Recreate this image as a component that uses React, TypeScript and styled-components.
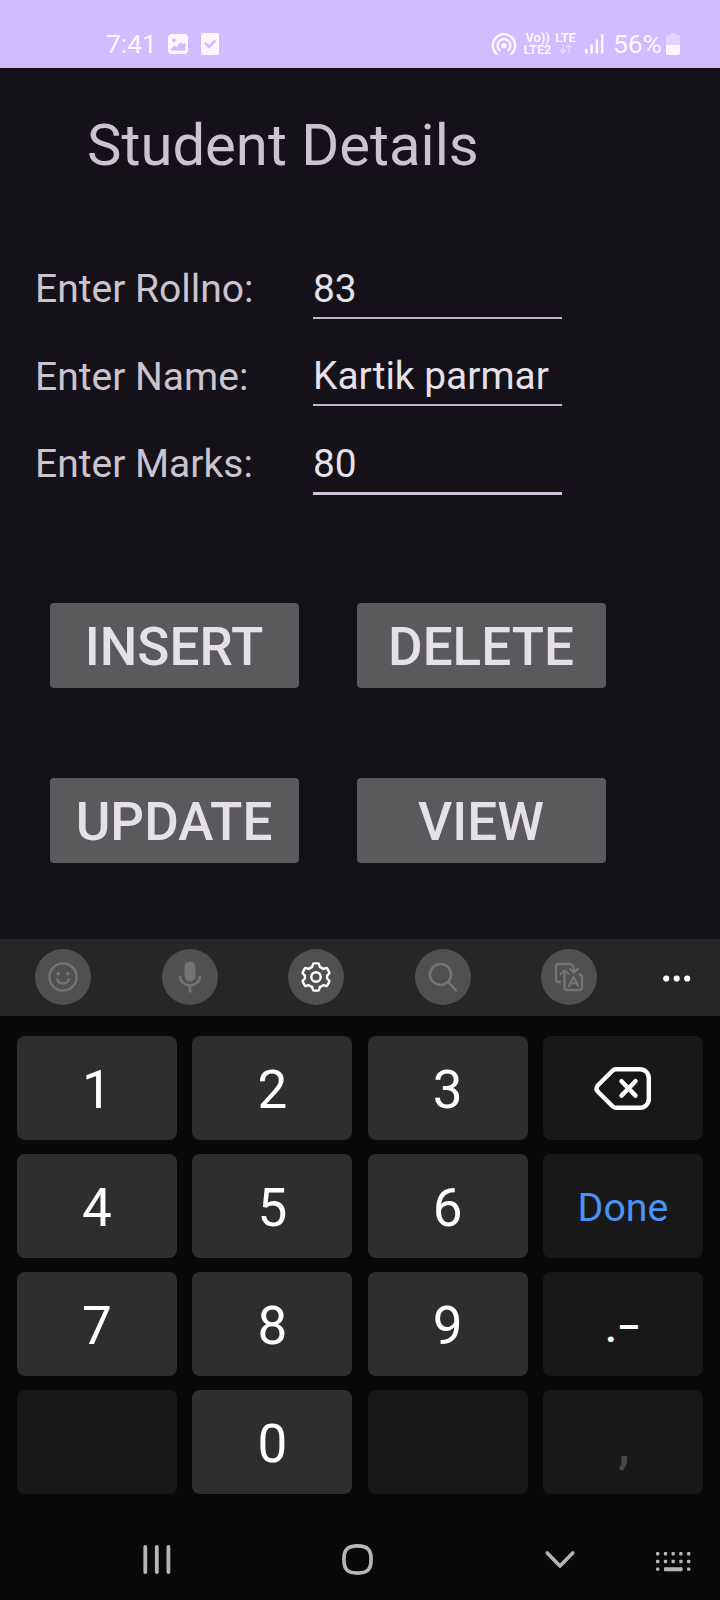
import React from "react";
import styled, { createGlobalStyle } from "styled-components";

const GlobalStyle = createGlobalStyle`
  * { box-sizing: border-box; }
  body { margin: 0; background: #090909; font-family: Roboto, "Liberation Sans", sans-serif; }
  button, input { font-family: inherit; }
  svg { display: block; flex: none; overflow: visible; }
`;

const Screen = styled.div`
  width: 720px;
  height: 1600px;
  display: flex;
  flex-direction: column;
  overflow: hidden;
`;

const StatusBar = styled.header`
  height: 68px;
  padding: 29px 40px 0 106px;
  display: flex;
  justify-content: space-between;
  background: #d0bcff;
  color: #fdf8ff;
`;

const StatusGroup = styled.div<{ $gap: number }>`
  height: 30px;
  display: flex;
  align-items: center;
  gap: ${(p) => p.$gap}px;
`;

const StatusText = styled.span<{ $width: number }>`
  width: ${(p) => p.$width}px;
  font-size: 26.3px;
  line-height: 30px;
  white-space: nowrap;
`;

const Network = styled.div<{ $width: number; $after?: number }>`
  width: ${(p) => p.$width}px;
  height: 24px;
  margin-right: ${(p) => p.$after ?? 0}px;
  display: flex;
  flex-direction: column;
  align-items: center;
  font-size: 12.8px;
  line-height: 12px;
  font-weight: 600;
  white-space: nowrap;
`;

const Form = styled.main`
  height: 871px;
  flex: none;
  padding-top: 42px;
  background: #141118;
  color: #cac4d0;
`;

const Title = styled.h1`
  margin: 0 0 84px 87px;
  font-size: 58px;
  line-height: 70px;
  font-weight: 400;
`;

const Fields = styled.div`
  height: 339px;
  padding-left: 35px;
`;

const Field = styled.label<{ $height: number }>`
  height: ${(p) => p.$height}px;
  display: flex;
  align-items: flex-start;
`;

const FieldName = styled.span<{ $drop?: number }>`
  width: 278px;
  padding-top: ${(p) => p.$drop ?? 1}px;
  font-size: 39px;
  line-height: 48px;
`;

const FieldInput = styled.input<{ $active?: boolean }>`
  width: 249px;
  height: ${(p) => (p.$active ? 56 : 55)}px;
  padding: 0 0 5px;
  border: 0;
  border-bottom: ${(p) => (p.$active ? "3px solid #d0c4dc" : "2px solid #bdb7c3")};
  outline: 0;
  border-radius: 0;
  background: transparent;
  color: #e6e0e9;
  font-size: 38.9px;
  line-height: 48px;
`;

const Actions = styled.div`
  display: grid;
  grid-template-columns: 249px 249px;
  grid-auto-rows: 85px;
  gap: 90px 58px;
  padding-left: 50px;
`;

const ActionButton = styled.button`
  padding: 3px 1px 0 0;
  border: 0;
  border-radius: 4px;
  background: #5a595c;
  color: #e6e0e9;
  font-size: 53px;
  line-height: 64px;
  font-weight: 500;
`;

const Toolbar = styled.div`
  height: 77px;
  flex: none;
  padding: 0 29.5px 2px 35px;
  display: flex;
  align-items: center;
  gap: 70.5px;
  background: #262626;
`;

const ToolButton = styled.button<{ $active?: boolean }>`
  width: 56px;
  height: 56px;
  flex: none;
  padding: 0;
  border: 0;
  border-radius: 50%;
  display: grid;
  place-items: center;
  background: #505050;
  color: ${(p) => (p.$active ? "#ffffff" : "#747474")};
`;

const MoreButton = styled.button`
  margin-left: -5px;
  padding: 3px 0 0;
  border: 0;
  background: none;
  color: #ffffff;
`;

const Keypad = styled.div`
  height: 504px;
  flex: none;
  padding: 20px 17px 0;
  display: grid;
  grid-template-columns: repeat(4, 160px);
  grid-auto-rows: 104px;
  justify-content: space-between;
  row-gap: 14px;
  background: #090909;
`;

const Key = styled.button<{ $kind?: "side" | "done" | "faint" }>`
  padding: ${(p) => (p.$kind === "side" ? "0" : p.$kind === "faint" ? "3px 0 0 2px" : "4px 0 0")};
  border: 0;
  border-radius: 8px;
  display: flex;
  align-items: center;
  justify-content: center;
  background: ${(p) => (p.$kind ? "#181818" : "#2e2e2e")};
  color: ${(p) => (p.$kind === "done" ? "#4b93f3" : p.$kind === "faint" ? "#484848" : "#ffffff")};
  font-size: ${(p) => (p.$kind === "done" ? 39.3 : 53)}px;
  font-weight: ${(p) => (p.$kind === "faint" ? 500 : 400)};
  line-height: 64px;
`;

const PeriodMinus = styled.span`
  padding-top: 5px;
  font-size: 43px;
  font-weight: 500;
`;

const NavBar = styled.nav`
  height: 80px;
  flex: none;
  padding: 0 29px 1px 143px;
  display: flex;
  align-items: center;
  color: #b6b6b6;
`;

const NavButton = styled.button<{ $before: number; $drop?: number }>`
  margin-left: ${(p) => p.$before}px;
  padding: ${(p) => p.$drop ?? 0}px 0 0;
  border: 0;
  background: none;
  color: inherit;
`;

const line = {
  fill: "none",
  stroke: "currentColor",
  strokeLinecap: "round" as const,
  strokeLinejoin: "round" as const,
};

const PictureIcon = () => (
  <svg width="20" height="20" viewBox="0 0 20 20">
    <rect width="20" height="20" rx="4" fill="currentColor" />
    <circle cx="6" cy="6.2" r="2" fill="#d0bcff" />
    <path d="M2.5 16.5V15l4-3.500 2 1.400 4-5 2 2.200 2-1 1 1v5.500l-1 1.200z" fill="#d0bcff" />
  </svg>
);

const TaskIcon = () => (
  <svg width="18" height="22" viewBox="0 0 18 22">
    <rect width="18" height="22" rx="2" fill="currentColor" />
    <path d="M4 9.800l4 4 6.500-6.300" fill="none" stroke="#d0bcff" strokeWidth="2.800" />
  </svg>
);

const HotspotIcon = () => (
  <svg width="28.5" height="23" viewBox="0 0 28.5 23" {...line} strokeWidth="2.300">
    <circle cx="12" cy="12.700" r="2.700" fill="currentColor" stroke="none" />
    <path d="M7.600 17.200a6.400 6.400 0 1 1 8.800 0M4.500 20.700a11.200 11.200 0 1 1 15 0" />
  </svg>
);

const TrafficIcon = () => (
  <svg width="14" height="11" viewBox="0 0 14 11" {...line} strokeWidth="1.200" opacity=".5">
    <path d="M4 1v8M1.500 6.500L4 9l2.500-2.500M10 9V1M7.500 3.500L10 1l2.500 2.500" />
  </svg>
);

const SignalIcon = () => (
  <svg width="24.5" height="20" viewBox="0 0 24.5 20" {...line} strokeWidth="2.500">
    <path d="M1.300 16v2.500M6.600 11.500v7M11.900 6.500v12M17.200 1.300v17.200" />
  </svg>
);

const BatteryIcon = () => (
  <svg width="14" height="22" viewBox="0 0 14 22" fill="currentColor">
    <path d="M4 0h6v2h2a2 2 0 0 1 2 2v8H0V4a2 2 0 0 1 2-2h2z" opacity=".4" />
    <path d="M0 12h14v8a2 2 0 0 1-2 2H2a2 2 0 0 1-2-2z" />
  </svg>
);

const SmileIcon = () => (
  <svg width="30" height="30" viewBox="0 0 30 30" {...line} strokeWidth="2.300">
    <circle cx="15" cy="15" r="13.600" />
    <path d="M9.300 17.500c1.200 5.200 10.200 5.200 11.400 0" strokeWidth="2.500" />
    <circle cx="10.200" cy="11.800" r="1.800" fill="currentColor" stroke="none" />
    <circle cx="19.800" cy="11.800" r="1.800" fill="currentColor" stroke="none" />
  </svg>
);

const MicIcon = () => (
  <svg width="24" height="32" viewBox="0 0 24 32" {...line} strokeWidth="2.500" strokeLinecap="butt">
    <rect x="6.500" y="0.500" width="11" height="20" rx="5.500" fill="currentColor" stroke="none" />
    <path d="M2 15a10 9.500 0 0 0 20 0M12 24.500v7" />
  </svg>
);

const GearIcon = () => (
  <svg width="30" height="30" viewBox="0 0 30 30" {...line} strokeWidth="2.400">
    <circle cx="15" cy="15" r="4.700" />
    <path d="M13 1.400h4q1 0 1.200 1l.6 2.600q2 .6 3.400 1.900l2.600-.8q1-.3 1.500.6l1.900 3.400q.5.900-.2 1.600l-1.900 1.800v3l1.900 1.800q.7.700.2 1.600l-1.900 3.400q-.5.900-1.500.6l-2.600-.8q-1.400 1.300-3.400 1.900l-.6 2.600q-.2 1-1.200 1h-4q-1 0-1.200-1l-.6-2.600q-2-.6-3.400-1.900l-2.600.8q-1 .3-1.500-.6l-1.900-3.400q-.5-.9.200-1.600l1.900-1.800v-3L2 11.700q-.7-.7-.2-1.600l1.900-3.400q.5-.9 1.500-.6l2.600.8Q9.200 5.600 11.200 5l.6-2.600q.2-1 1.200-1z" />
  </svg>
);

const SearchIcon = () => (
  <svg width="28" height="28" viewBox="0 0 28 28" {...line} strokeWidth="2.500">
    <circle cx="11.500" cy="11.500" r="10.500" />
    <path d="M19 19l8 8.300" />
  </svg>
);

const TranslateIcon = () => (
  <svg width="28" height="28" viewBox="0 0 28 28" {...line} strokeWidth="2.300">
    <path d="M5 19H3.500A2.500 2.500 0 0 1 1 16.500v-13A2.500 2.500 0 0 1 3.500 1H14a5 5 0 0 1 5 5v2.500M15 5.800l4 3.700 4-3.700M13.500 11l-4-3.500-4 3.500M9.500 8v16.500a2.500 2.500 0 0 0 2.500 2.500h12.500a2.500 2.500 0 0 0 2.500-2.500V14a2.500 2.500 0 0 0-2.500-2.500M14 23l4.500-9 4.500 9M16 20.300h5" />
  </svg>
);

const MoreIcon = () => (
  <svg width="27" height="7" viewBox="0 0 27 7" fill="currentColor">
    <circle cx="3.200" cy="3.500" r="3.100" />
    <circle cx="13.700" cy="3.500" r="3.100" />
    <circle cx="24.200" cy="3.500" r="3.100" />
  </svg>
);

const BackspaceIcon = () => (
  <svg width="57" height="43" viewBox="0 0 57 43" {...line} strokeWidth="4.400">
    <path d="M22 2.200h24a8.800 8.800 0 0 1 8.800 8.800v21a8.800 8.800 0 0 1-8.800 8.800H22q-2 0-3.500-1.500L3.700 24.500q-2.400-3 0-6L18.500 3.700Q20 2.200 22 2.200z" />
    <path d="M27.500 14.200l14 14.400M41.500 14.200l-14 14.400" />
  </svg>
);

const RecentsIcon = () => (
  <svg width="28" height="29" viewBox="0 0 28 29" {...line} strokeWidth="3.800">
    <path d="M2.300 2v25M13.800 2v25M25.400 2v25" />
  </svg>
);

const HomeIcon = () => (
  <svg width="31" height="31" viewBox="0 0 31 31" {...line} strokeWidth="3.700">
    <path d="M15.500 1.900C25.500 1.900 29.100 5.500 29.100 15.500S25.500 29.100 15.500 29.100 1.900 25.500 1.900 15.500 5.500 1.900 15.500 1.900z" />
  </svg>
);

const HideIcon = () => (
  <svg width="30" height="18" viewBox="0 0 30 18" {...line} strokeWidth="3.600">
    <path d="M2.300 2l12.700 13L27.700 2" />
  </svg>
);

const KeyboardIcon = () => (
  <svg width="35" height="21" viewBox="0 0 35 21" fill="currentColor">
    {[0, 7.8, 15.5, 23.2, 31].map((x) => (
      <React.Fragment key={x}>
        <rect x={x} y="1" width="3.400" height="3.400" rx="1" />
        <rect x={x} y="8.800" width="3.400" height="3.400" rx="1" />
      </React.Fragment>
    ))}
    <rect x="0" y="16.400" width="3.400" height="3.400" rx="1" />
    <rect x="8" y="16.200" width="18.600" height="4" rx="1" />
    <rect x="31" y="16.400" width="3.400" height="3.400" rx="1" />
  </svg>
);

export default function App() {
  return (
    <Screen>
      <GlobalStyle />
      <StatusBar>
        <StatusGroup $gap={13}>
          <StatusText $width={49}>7:41</StatusText>
          <PictureIcon />
          <TaskIcon />
        </StatusGroup>
        <StatusGroup $gap={4}>
          <HotspotIcon />
          <Network $width={27}>
            <span>Vo))</span>
            <span>LTE2</span>
          </Network>
          <Network $width={21} $after={4.5}>
            <span>LTE</span>
            <TrafficIcon />
          </Network>
          <SignalIcon />
          <StatusText $width={49}>56%</StatusText>
          <BatteryIcon />
        </StatusGroup>
      </StatusBar>

      <Form>
        <Title>Student Details</Title>
        <Fields>
          <Field $height={87}>
            <FieldName>Enter Rollno:</FieldName>
            <FieldInput defaultValue="83" />
          </Field>
          <Field $height={88}>
            <FieldName $drop={2}>Enter Name:</FieldName>
            <FieldInput defaultValue="Kartik parmar" />
          </Field>
          <Field $height={88}>
            <FieldName>Enter Marks:</FieldName>
            <FieldInput $active defaultValue="80" />
          </Field>
        </Fields>
        <Actions>
          <ActionButton>INSERT</ActionButton>
          <ActionButton>DELETE</ActionButton>
          <ActionButton>UPDATE</ActionButton>
          <ActionButton>VIEW</ActionButton>
        </Actions>
      </Form>

      <Toolbar>
        <ToolButton><SmileIcon /></ToolButton>
        <ToolButton><MicIcon /></ToolButton>
        <ToolButton $active><GearIcon /></ToolButton>
        <ToolButton><SearchIcon /></ToolButton>
        <ToolButton><TranslateIcon /></ToolButton>
        <MoreButton><MoreIcon /></MoreButton>
      </Toolbar>

      <Keypad>
        <Key>1</Key>
        <Key>2</Key>
        <Key>3</Key>
        <Key $kind="side"><BackspaceIcon /></Key>
        <Key>4</Key>
        <Key>5</Key>
        <Key>6</Key>
        <Key $kind="done">Done</Key>
        <Key>7</Key>
        <Key>8</Key>
        <Key>9</Key>
        <Key $kind="side"><PeriodMinus>.−</PeriodMinus></Key>
        <Key $kind="side" />
        <Key>0</Key>
        <Key $kind="side" />
        <Key $kind="faint">,</Key>
      </Keypad>

      <NavBar>
        <NavButton $before={0}><RecentsIcon /></NavButton>
        <NavButton $before={171}><HomeIcon /></NavButton>
        <NavButton $before={171.5}><HideIcon /></NavButton>
        <NavButton $before={81.5} $drop={3}><KeyboardIcon /></NavButton>
      </NavBar>
    </Screen>
  );
}
